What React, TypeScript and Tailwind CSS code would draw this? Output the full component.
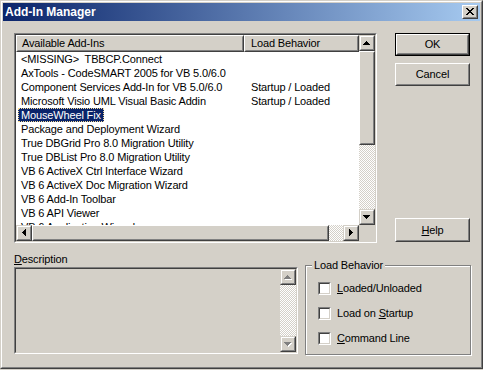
import React from "react";

// pixel glyphs for the little scrollbar / caption buttons
const ARROWS: Record<string, string[]> = {
  up: ["...X...", "..XXX..", ".XXXXX.", "XXXXXXX"],
  down: ["XXXXXXX", ".XXXXX.", "..XXX..", "...X..."],
  left: ["...X", "..XX", ".XXX", "XXXX", ".XXX", "..XX", "...X"],
  right: ["X...", "XX..", "XXX.", "XXXX", "XXX.", "XX..", "X..."],
  close: ["XX....XX", ".XX..XX.", "..XXXX..", "...XX...", "..XXXX..", ".XX..XX.", "XX....XX"],
};

function Glyph({ name, disabled = false }: { name: string; disabled?: boolean }) {
  const rows = ARROWS[name];
  const w = rows[0].length;
  const h = rows.length;
  const rects = (fill: string, dx: number) =>
    rows.flatMap((row, y) =>
      row.split("").map((c, x) =>
        c === "X" ? <rect key={`${fill}${x}-${y}`} x={x + dx} y={y + dx} width={1} height={1} fill={fill} /> : null
      )
    );
  return (
    <svg width={w + 1} height={h + 1} shapeRendering="crispEdges" className="block">
      {disabled && rects("#ffffff", 1)}
      {rects(disabled ? "#808080" : "#000000", 0)}
    </svg>
  );
}

function Raised({ className = "", children }: { className?: string; children?: React.ReactNode }) {
  return (
    <div className={`border border-t-white border-l-white border-r-[#404040] border-b-[#404040] ${className}`}>
      <div className="w-full h-full border border-t-[#d4d0c8] border-l-[#d4d0c8] border-r-[#808080] border-b-[#808080] bg-[#d4d0c8] flex items-center justify-center">
        {children}
      </div>
    </div>
  );
}

function ScrollBtn({ name, disabled = false, className = "" }: { name: string; disabled?: boolean; className?: string }) {
  return (
    <div className={`w-[16px] h-[16px] shrink-0 border border-t-[#d4d0c8] border-l-[#d4d0c8] border-r-[#404040] border-b-[#404040] ${className}`}>
      <div className="w-full h-full border border-t-white border-l-white border-r-[#808080] border-b-[#808080] bg-[#d4d0c8] flex items-center justify-center">
        <Glyph name={name} disabled={disabled} />
      </div>
    </div>
  );
}

function Sunken({ className = "", inner = "", children }: { className?: string; inner?: string; children?: React.ReactNode }) {
  return (
    <div className={`border border-t-[#808080] border-l-[#808080] border-r-white border-b-white ${className}`}>
      <div className={`w-full h-full border border-t-[#404040] border-l-[#404040] border-r-[#d4d0c8] border-b-[#d4d0c8] ${inner}`}>
        {children}
      </div>
    </div>
  );
}

const checker = "bg-[repeating-conic-gradient(#ffffff_0_25%,#d4d0c8_0_50%)] bg-[length:2px_2px]";

const addins: [string, string][] = [
  ["<MISSING>  TBBCP.Connect", ""],
  ["AxTools - CodeSMART 2005 for VB 5.0/6.0", ""],
  ["Component Services Add-In for VB 5.0/6.0", "Startup / Loaded"],
  ["Microsoft Visio UML Visual Basic Addin", "Startup / Loaded"],
  ["MouseWheel Fix", ""],
  ["Package and Deployment Wizard", ""],
  ["True DBGrid Pro 8.0 Migration Utility", ""],
  ["True DBList Pro 8.0 Migration Utility", ""],
  ["VB 6 ActiveX Ctrl Interface Wizard", ""],
  ["VB 6 ActiveX Doc Migration Wizard", ""],
  ["VB 6 Add-In Toolbar", ""],
  ["VB 6 API Viewer", ""],
  ["VB 6 Application Wizard", ""],
];

function CheckRow({ before, hot, after }: { before: string; hot: string; after: string }) {
  return (
    <div className="flex items-center h-[13px]">
      <Sunken className="w-[13px] h-[13px] shrink-0" inner="bg-white" />
      <span className="ml-[6px] leading-[13px] whitespace-pre">
        {before}
        <u>{hot}</u>
        {after}
      </span>
    </div>
  );
}

export default function App() {
  return (
    <div className="w-[483px] h-[370px] bg-[#d4d0c8] text-black text-[11px] tracking-[-0.15px] font-['Liberation_Sans',Arial,sans-serif]">
      <div className="h-[369px] border border-t-[#d4d0c8] border-l-[#d4d0c8] border-r-[#404040] border-b-[#404040]">
        <div className="h-full border border-t-white border-l-white border-r-[#808080] border-b-[#808080] p-px">
          {/* title bar */}
          <div className="h-[18px] flex items-center bg-[linear-gradient(to_right,#0a246a,#a6caf0)]">
            <span className="pl-[2px] text-white font-bold text-[12px] tracking-normal leading-[18px]">Add-In Manager</span>
            <div className="ml-auto mr-[2px] w-[16px] h-[14px] border border-t-white border-l-white border-r-[#404040] border-b-[#404040]">
              <div className="w-full h-full border border-t-[#d4d0c8] border-l-[#d4d0c8] border-r-[#808080] border-b-[#808080] bg-[#d4d0c8] flex items-center justify-center">
                <Glyph name="close" />
              </div>
            </div>
          </div>

          {/* list + buttons */}
          <div className="flex mt-[12px] ml-[11px] h-[210px]">
            <Sunken className="w-[363px] h-full" inner="bg-white flex">
              <div className="w-[343px] flex flex-col">
                <div className="flex h-[17px] shrink-0">
                  <Raised className="w-[228px] h-full">
                    <span className="w-full pl-[4px] leading-[13px]">Available Add-Ins</span>
                  </Raised>
                  <Raised className="w-[115px] h-full">
                    <span className="w-full pl-[5px] leading-[13px]">Load Behavior</span>
                  </Raised>
                </div>
                <div className="flex-1 overflow-hidden">
                  {addins.map(([name, load], i) => (
                    <div key={i} className="flex h-[14px] leading-[14px]">
                      <div className="w-[228px] whitespace-pre">
                        {i === 4 ? (
                          <span className="ml-[2px] inline-block h-[14px] leading-[12px] px-[2px] bg-[#0a246a] text-white border border-dotted border-[#f5db95]">
                            {name}
                          </span>
                        ) : (
                          <span className="pl-[5px]">{name}</span>
                        )}
                      </div>
                      <div className="pl-[7px]">{load}</div>
                    </div>
                  ))}
                </div>
                <div className="flex h-[16px] shrink-0">
                  <ScrollBtn name="left" />
                  <Raised className="w-[297px] h-full" />
                  <div className={`flex-1 ${checker}`} />
                  <ScrollBtn name="right" />
                </div>
              </div>
              <div className="w-[16px] flex flex-col">
                <ScrollBtn name="up" />
                <Raised className="w-[16px] h-[94px]" />
                <div className={`flex-1 ${checker}`} />
                <ScrollBtn name="down" />
                <div className="h-[16px] bg-[#d4d0c8]" />
              </div>
            </Sunken>

            <div className="ml-[18px] w-[75px] flex flex-col">
              <div className="h-[23px] border border-black">
                <Raised className="w-full h-full">OK</Raised>
              </div>
              <Raised className="mt-[7px] h-[23px]">Cancel</Raised>
              <Raised className="mt-auto mb-px h-[24px]">
                <span>
                  <u>H</u>elp
                </span>
              </Raised>
            </div>
          </div>

          {/* description + load behavior */}
          <div className="flex items-start mt-[10px] ml-[11px]">
            <div className="w-[284px]">
              <div className="h-[14px] leading-[13px]">
                <u>D</u>escription
              </div>
              <Sunken className="h-[87px]" inner="bg-[#d4d0c8] flex justify-end">
                <div className="w-[16px] flex flex-col">
                  <ScrollBtn name="up" disabled />
                  <div className={`flex-1 ${checker}`} />
                  <ScrollBtn name="down" disabled />
                </div>
              </Sunken>
            </div>

            <div className="relative ml-[7px] mt-[12px] w-[166px] h-[90px] border border-[#808080] shadow-[inset_1px_1px_0_#ffffff,1px_1px_0_#ffffff]">
              <span className="absolute left-[6px] top-[-7px] px-[2px] bg-[#d4d0c8] leading-[13px]">Load Behavior</span>
              <div className="flex flex-col gap-[12px] pt-[16px] pl-[12px]">
                <CheckRow before="" hot="L" after="oaded/Unloaded" />
                <CheckRow before="Load on " hot="S" after="tartup" />
                <CheckRow before="" hot="C" after="ommand Line" />
              </div>
            </div>
          </div>
        </div>
      </div>
    </div>
  );
}
